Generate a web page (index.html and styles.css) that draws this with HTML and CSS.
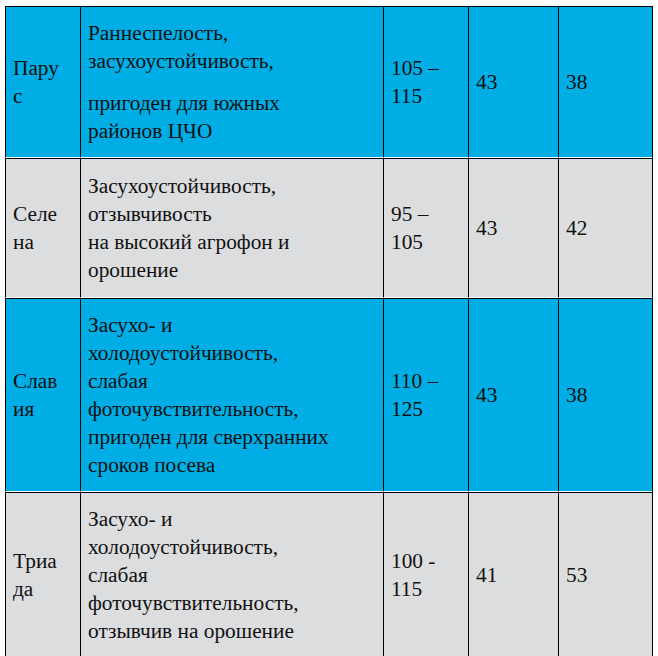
FILE: index.html
```html
<!DOCTYPE html>
<html lang="ru">
<head>
<meta charset="utf-8">
<link rel="stylesheet" href="styles.css">
</head>
<body>
<div class="table">
  <div class="row blue r1">
    <div class="cell">Пару<br>с</div>
    <div class="cell desc">
      <p>Раннеспелость,<br>засухоустойчивость,</p>
      <p>пригоден для южных<br>районов ЦЧО</p>
    </div>
    <div class="cell">105 –<br>115</div>
    <div class="cell">43</div>
    <div class="cell">38</div>
  </div>
  <div class="row gray r2">
    <div class="cell">Селе<br>на</div>
    <div class="cell desc">Засухоустойчивость,<br>отзывчивость<br>на высокий агрофон и<br>орошение</div>
    <div class="cell">95 –<br>105</div>
    <div class="cell">43</div>
    <div class="cell">42</div>
  </div>
  <div class="row blue r3">
    <div class="cell">Слав<br>ия</div>
    <div class="cell desc">Засухо- и<br>холодоустойчивость,<br>слабая<br>фоточувствительность,<br>пригоден для сверхранних<br>сроков посева</div>
    <div class="cell">110 –<br>125</div>
    <div class="cell">43</div>
    <div class="cell">38</div>
  </div>
  <div class="row gray r4">
    <div class="cell">Триа<br>да</div>
    <div class="cell desc">Засухо- и<br>холодоустойчивость,<br>слабая<br>фоточувствительность,<br>отзывчив на орошение</div>
    <div class="cell">100 -<br>115</div>
    <div class="cell">41</div>
    <div class="cell">53</div>
  </div>
</div>
</body>
</html>
```
FILE: styles.css
```css
body {
  margin: 0;
  padding: 6px 0 0 5px;
  font-size: 21.33px;
}
.table {
  font-family: "Liberation Serif";
  line-height: 28px;
  color: #111111;
  width: 648px;
  box-sizing: border-box;
  border-top: 1px solid #000;
  border-right: 1px solid #000;
  border-bottom: 1px solid #000;
}
.row {
  display: grid;
  grid-template-columns: 75px 303px 85px 90px 94px;
  box-sizing: border-box;
}
.row + .row {
  border-top: 1px solid #000;
}
.blue { background: #00ade5; }
.gray { background: #dcdddf; }
.r1 { height: 151px; }
.r2 { height: 140px; }
.r3 { height: 194px; }
.r4 { height: 164px; }
.cell {
  border-left: 1px solid #000;
  border-bottom: 1px solid #ffffff;
  padding: 0 4px 0 7px;
  display: flex;
  flex-direction: column;
  justify-content: center;
  white-space: nowrap;
}
.r4 .cell { border-bottom: none; }
.desc p {
  margin: 0;
}
.desc p + p {
  margin-top: 14px;
}
```
